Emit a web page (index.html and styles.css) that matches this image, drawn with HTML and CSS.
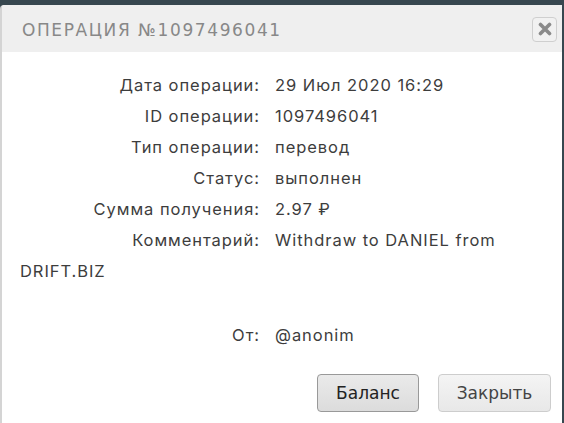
FILE: index.html
```html
<!DOCTYPE html>
<html lang="ru">
<head>
<meta charset="utf-8">
<link rel="stylesheet" href="styles.css">
</head>
<body>
<div class="topbar"></div>
<div class="dialog">
  <div class="header">
    <div class="title">Операция №1097496041</div>
    <button class="close" aria-label="Закрыть">
      <svg width="14" height="14" viewBox="0 0 14 14"><path d="M2.5 2.5 L11.5 11.5 M11.5 2.5 L2.5 11.5" stroke="#8a8a8a" stroke-width="3.6" stroke-linecap="round"/></svg>
    </button>
  </div>
  <div class="content">
    <div class="row"><span class="label">Дата операции:</span><span class="value">29 Июл 2020 16:29</span></div>
    <div class="row"><span class="label">ID операции:</span><span class="value">1097496041</span></div>
    <div class="row"><span class="label">Тип операции:</span><span class="value">перевод</span></div>
    <div class="row"><span class="label">Статус:</span><span class="value">выполнен</span></div>
    <div class="row"><span class="label">Сумма получения:</span><span class="value">2.97 ₽</span></div>
    <div class="row comment"><span class="label">Комментарий:</span><span class="value">Withdraw to DANIEL from DRIFT.BIZ</span></div>
    <div class="row from"><span class="label">От:</span><span class="value">@anonim</span></div>
  </div>
  <div class="footer">
    <button class="btn active">Баланс</button>
    <button class="btn close-btn">Закрыть</button>
  </div>
</div>
</body>
</html>
```
FILE: styles.css
```css
html, body {
  margin: 0;
  padding: 0;
  background: #37474f;
  width: 564px;
  height: 423px;
  overflow: hidden;
}
.topbar {
  height: 5px;
  background: #37474f;
}
.dialog {
  background: #fff;
  border-left: 2px solid #d4d4d4;
  border-top-left-radius: 4px;
  margin-right: 2px;
  height: 418px;
  box-sizing: border-box;
  font-family: "Inter", "Open Sans", sans-serif;
}
.header {
  background: #efefef;
  height: 47px;
  display: flex;
  align-items: center;
  justify-content: space-between;
  padding: 0 5px 0 20px;
  border-top-left-radius: 3px;
}
.title {
  text-transform: uppercase;
  color: #888;
  font-family: "DejaVu Sans", sans-serif;
  font-size: 17px;
  letter-spacing: 1.6px;
  padding-top: 2px;
}
.close {
  width: 25px;
  height: 25px;
  border: 1px solid #cfcfcf;
  border-radius: 4px;
  background: #f1f1f1;
  padding: 0;
  display: flex;
  align-items: center;
  justify-content: center;
  margin-top: 1px;
}
.content {
  padding: 18px 46px 0 18px;
  color: #3d3d3d;
  font-size: 16.5px;
  letter-spacing: 0.95px;
}
.row {
  line-height: 31px;
}
.label {
  display: inline-block;
  width: 240px;
  text-align: right;
  margin-right: 15px;
}
.from {
  margin-top: 33px;
}
.footer {
  display: flex;
  justify-content: flex-end;
  gap: 19px;
  padding: 23px 11px 0 0;
}
.btn {
  height: 38px;
  border: 1px solid #cdcdcd;
  border-radius: 4px;
  background: linear-gradient(#f4f4f4, #e8e8e8);
  font-family: "DejaVu Sans", sans-serif;
  font-size: 17px;
  color: #444;
  padding: 0;
}
.btn.active {
  border-color: #999;
  background: linear-gradient(#eaeaea, #dcdcdc);
  color: #222;
  width: 102px;
}
.close-btn {
  width: 113px;
}
```
